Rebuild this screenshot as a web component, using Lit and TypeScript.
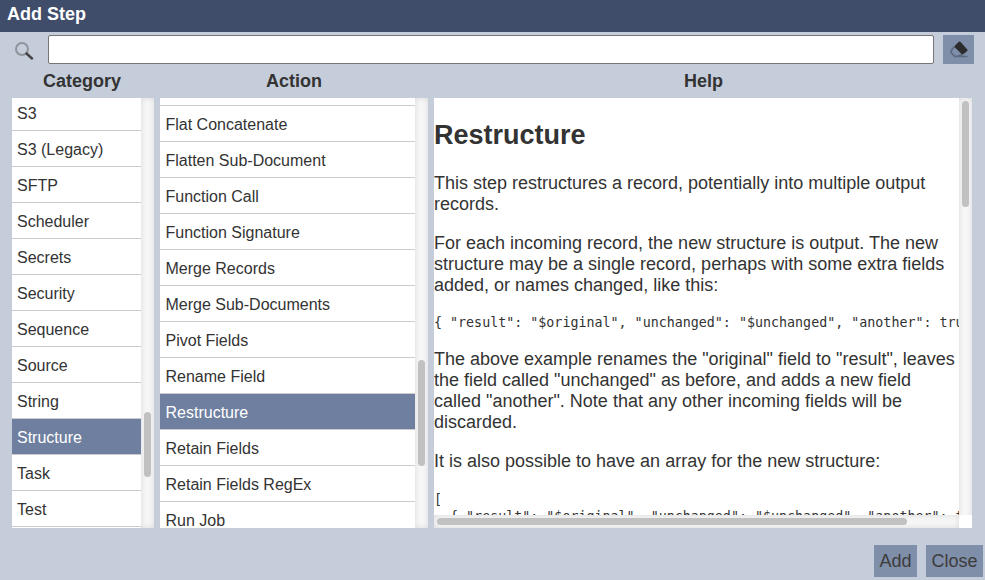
import { LitElement, html, css } from "lit";
import { customElement } from "lit/decorators.js";

const CATEGORIES = ["S3", "S3 (Legacy)", "SFTP", "Scheduler", "Secrets", "Security", "Sequence", "Source", "String", "Structure", "Task", "Test", "Text"];
const ACTIONS = ["Filter", "Flat Concatenate", "Flatten Sub-Document", "Function Call", "Function Signature", "Merge Records", "Merge Sub-Documents", "Pivot Fields", "Rename Field", "Restructure", "Retain Fields", "Retain Fields RegEx", "Run Job"];

@customElement("app-root")
export class AppRoot extends LitElement {
  static styles = css`
    :host { display: flex; flex-direction: column; width: 985px; height: 580px; background: #c5cddb; color: #333; font-family: "Liberation Sans", Arial, sans-serif; font-size: 16px; overflow: hidden; }
    .title { height: 32px; flex: none; background: #3f4d6b; color: #fff; font-weight: bold; font-size: 18px; line-height: 28px; padding-left: 7px; box-sizing: border-box; }
    .search { display: flex; align-items: stretch; height: 29px; margin-top: 3px; flex: none; }
    .glass { width: 48px; flex: none; display: flex; align-items: center; justify-content: center; }
    .search input { width: 886px; box-sizing: border-box; border: 1px solid #767676; border-radius: 2px; background: #fff; padding: 0; margin: 0; outline: none; }
    .eraser { width: 31px; margin-left: 9px; background: #7f8ea9; display: flex; align-items: center; justify-content: center; }
    .heads { display: flex; height: 34px; flex: none; font-weight: bold; font-size: 18px; line-height: 34px; text-align: center; }
    .h1 { width: 140px; margin-left: 12px; }
    .h2 { width: 268px; margin-left: 8px; }
    .h3 { width: 539px; margin-left: 6px; }
    .cols { display: flex; height: 430px; flex: none; padding-left: 12px; }
    .col { display: flex; overflow: hidden; height: 100%; background: #fff; }
    .cat { width: 142px; }
    .act { width: 268px; margin-left: 6px; }
    .help { width: 538px; margin-left: 6px; position: relative; }
    .clip { flex: 1; min-width: 0; overflow: hidden; }
    .shift-cat { margin-top: -3px; }
    .shift-act { margin-top: -28px; }
    .row { height: 36px; box-sizing: border-box; border-bottom: 1px solid #ccc; line-height: 37px; padding-left: 5px; white-space: nowrap; }
    .act .row { padding-left: 5.5px; }
    .row.sel { background: #6e7fa0; color: #fff; }
    .vbar { width: 13px; flex: none; background: #f7f7f7; box-shadow: inset 0 0 6px rgba(0, 0, 0, 0.12); box-sizing: border-box; padding: 0 3px; }
    .thumb { background: #c1c1c1; border-radius: 4px; }
    .doc { width: 1100px; line-height: 21px; font-size: 18px; }
    .doc h1 { font-size: 27px; font-weight: bold; line-height: 30px; margin: 22px 0 0; }
    .doc p { margin: 18px 0 0; width: 522px; }
    .doc h1 + p { margin-top: 23px; }
    .doc pre { font-family: "DejaVu Sans Mono", monospace; font-size: 13.33px; line-height: 17px; margin: 19px 0 0; }
    .doc pre.one { margin: 18px 0 18px; }
    .hbar { position: absolute; left: 0; bottom: 0; width: 525px; height: 13px; background: #f7f7f7; box-shadow: inset 0 0 6px rgba(0, 0, 0, 0.12); box-sizing: border-box; padding: 3px 0 3px 3px; }
    .hthumb { background: #c1c1c1; height: 100%; width: 470px; border-radius: 4px; }
    .corner { position: absolute; right: 0; bottom: 0; width: 13px; height: 13px; background: #fff; }
    .foot { flex: 1; display: flex; justify-content: flex-end; align-items: flex-start; gap: 9px; padding: 17px 2px 0 0; }
    .btn { height: 32px; line-height: 32px; background: #7f8ea9; font-size: 18px; text-align: center; color: #3c3c3c; }
    .add { width: 43px; }
    .close { width: 57px; }
  `;

  private bar(top: number, height: number) {
    return html`<div class="vbar"><div class="thumb" style="margin-top:${top}px;height:${height}px"></div></div>`;
  }

  render() {
    return html`
      <div class="title">Add Step</div>
      <div class="search">
        <div class="glass">
          <svg width="20" height="20" viewBox="0 0 20 20" fill="none">
            <circle cx="8" cy="9" r="6" stroke="#8f949c" stroke-width="2"/>
            <path d="M12.5 13.5 L18 18.5" stroke="#444" stroke-width="2.4" stroke-linecap="round"/>
          </svg>
        </div>
        <input type="text" />
        <div class="eraser">
          <svg width="22" height="18" viewBox="0 0 22 18">
            <path d="M6.5 5.5 L3 9.8 Q2.4 11 3.4 12 L7 15.5 H19.5 M7 15.5 L10 15 L14.5 13.5" fill="none" stroke="#5c687e" stroke-width="1.7" stroke-linejoin="round"/>
            <path d="M10.6 1 Q11.6 0 12.6 1 L19.3 8.4 Q20 9.4 19 10.2 L15.4 13 Q14.5 13.8 13.6 12.9 L7 6.4 Q6.2 5.5 7 4.6 Z" fill="#2c2c2c"/>
          </svg>
        </div>
      </div>
      <div class="heads">
        <div class="h1">Category</div>
        <div class="h2">Action</div>
        <div class="h3">Help</div>
      </div>
      <div class="cols">
        <div class="col cat">
          <div class="clip">
            <div class="shift-cat">
              ${CATEGORIES.map((c) => html`<div class="row ${c === "Structure" ? "sel" : ""}">${c}</div>`)}
            </div>
          </div>
          ${this.bar(314, 65)}
        </div>
        <div class="col act">
          <div class="clip">
            <div class="shift-act">
              ${ACTIONS.map((c) => html`<div class="row ${c === "Restructure" ? "sel" : ""}">${c}</div>`)}
            </div>
          </div>
          ${this.bar(262, 106)}
        </div>
        <div class="col help">
          <div class="clip">
            <div class="doc">
              <h1>Restructure</h1>
              <p>This step restructures a record, potentially into multiple output records.</p>
              <p>For each incoming record, the new structure is output. The new structure may be a single record, perhaps with some extra fields added, or names changed, like this:</p>
              <pre class="one">{ "result": "$original", "unchanged": "$unchanged", "another": true }</pre>
              <p>The above example renames the "original" field to "result", leaves the field called "unchanged" as before, and adds a new field called "another". Note that any other incoming fields will be discarded.</p>
              <p>It is also possible to have an array for the new structure:</p>
              <pre>[
  { "result": "$original", "unchanged": "$unchanged", "another": true },
]</pre>
            </div>
          </div>
          ${this.bar(3, 106)}
          <div class="hbar"><div class="hthumb"></div></div>
          <div class="corner"></div>
        </div>
      </div>
      <div class="foot">
        <div class="btn add">Add</div>
        <div class="btn close">Close</div>
      </div>
    `;
  }
}
